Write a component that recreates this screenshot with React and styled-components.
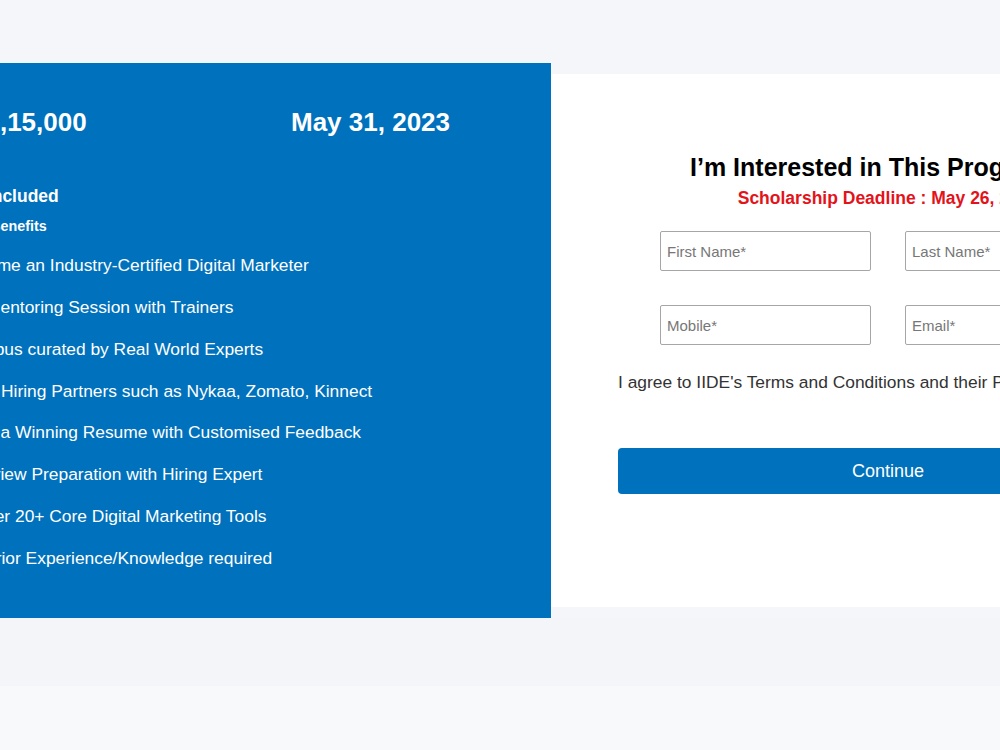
import React from "react"
import styled, { createGlobalStyle } from "styled-components"

const colors = {
  blue: "#0071bc",
  page: "#f5f6f9",
  footer: "#f8f9fb",
  red: "#e3131b",
}

const GlobalStyle = createGlobalStyle`
  html, body {
    margin: 0;
    padding: 0;
    background: ${colors.page};
    overflow: hidden;
  }
  body {
    font-family: "Liberation Sans", Arial, sans-serif;
  }
  * {
    box-sizing: border-box;
  }
`

const Page = styled.div`
  width: 1000px;
  height: 750px;
  display: flex;
  flex-direction: column;
`

const Section = styled.section`
  display: flex;
  align-items: center;
  padding-top: 63px;
`

// the left part of this panel sits past the window edge, as in the screenshot
const BluePanel = styled.div`
  flex-shrink: 0;
  width: 601px;
  height: 555px;
  margin-left: -50px;
  padding: 43px 0 0 10px;
  background: ${colors.blue};
  color: #fff;
`

const TopRow = styled.div`
  display: grid;
  grid-template-columns: 331px auto;
  font-size: 26px;
  font-weight: 700;
  line-height: 32px;
`

const Price = styled.div`
  margin-left: -15px;
`

const IncludedTitle = styled.h3`
  margin: 46px 0 0 -14px;
  font-size: 17.5px;
  font-weight: 700;
  line-height: 24px;
`

const BenefitsTitle = styled.h4`
  margin: 8px 0 0;
  font-size: 14.3px;
  font-weight: 700;
  line-height: 20px;
`

const BenefitList = styled.ul`
  list-style: none;
  margin: 17px 0 0 -3px;
  padding: 0;
  display: flex;
  flex-direction: column;
  gap: 17.85px;
`

const Benefit = styled.li`
  font-size: 17.4px;
  line-height: 24px;
`

const FormPanel = styled.div`
  flex-shrink: 0;
  width: 674px;
  height: 533px;
  padding: 78px 67px 0;
  background: #fff;
`

const Title = styled.h2`
  margin: 0;
  font-size: 25px;
  font-weight: 700;
  line-height: 30px;
  text-align: center;
  color: #000;
  white-space: nowrap;
`

const Deadline = styled.p`
  margin: 5px 0 0;
  font-size: 17.5px;
  font-weight: 700;
  line-height: 22px;
  text-align: center;
  color: ${colors.red};
  white-space: nowrap;
`

const Fields = styled.div`
  display: grid;
  grid-template-columns: 211px 211px;
  justify-content: center;
  column-gap: 34px;
  row-gap: 34px;
  margin-top: 22px;
`

const Field = styled.input`
  height: 40px;
  width: 100%;
  padding: 0 6px;
  border: 1px solid #a6a6a6;
  border-radius: 2px;
  font-family: "Liberation Sans", Arial, sans-serif;
  font-size: 15px;
  color: #333;
  background: #fff;
  outline: none;

  &::placeholder {
    color: #777;
  }
`

const Agree = styled.p`
  margin: 26px 0 0;
  font-size: 17.4px;
  line-height: 22px;
  color: #333;
  white-space: nowrap;
`

const Button = styled.button`
  display: block;
  width: 100%;
  height: 46px;
  margin-top: 55px;
  border: none;
  border-radius: 4px;
  background: ${colors.blue};
  color: #fff;
  font-family: "Liberation Sans", Arial, sans-serif;
  font-size: 18px;
  cursor: pointer;
`

const Band = styled.div`
  height: 68px;
  background: #f4f5f8;
`

const Footer = styled.div`
  flex: 1;
  background: ${colors.footer};
`

const benefits = [
  "Become an Industry-Certified Digital Marketer",
  "1:1 Mentoring Session with Trainers",
  "Syllabus curated by Real World Experts",
  "100+ Hiring Partners such as Nykaa, Zomato, Kinnect",
  "Build a Winning Resume with Customised Feedback",
  "Interview Preparation with Hiring Expert",
  "Master 20+ Core Digital Marketing Tools",
  "No Prior Experience/Knowledge required",
]

const App = () => {
  return (
    <Page>
      <GlobalStyle />
      <Section>
        <BluePanel>
          <TopRow>
            <Price>Rs 1,15,000</Price>
            <div>May 31, 2023</div>
          </TopRow>
          <IncludedTitle>GST Included</IncludedTitle>
          <BenefitsTitle>Key Benefits</BenefitsTitle>
          <BenefitList>
            {benefits.map((b) => (
              <Benefit key={b}>{b}</Benefit>
            ))}
          </BenefitList>
        </BluePanel>
        <FormPanel>
          <Title>I’m Interested in This Programme</Title>
          <Deadline>Scholarship Deadline : May 26, 2023</Deadline>
          <Fields>
            <Field placeholder="First Name*" />
            <Field placeholder="Last Name*" />
            <Field placeholder="Mobile*" />
            <Field placeholder="Email*" />
          </Fields>
          <Agree>I agree to IIDE's Terms and Conditions and their Privacy Policy</Agree>
          <Button>Continue</Button>
        </FormPanel>
      </Section>
      <Band />
      <Footer />
    </Page>
  )
}

export default App
